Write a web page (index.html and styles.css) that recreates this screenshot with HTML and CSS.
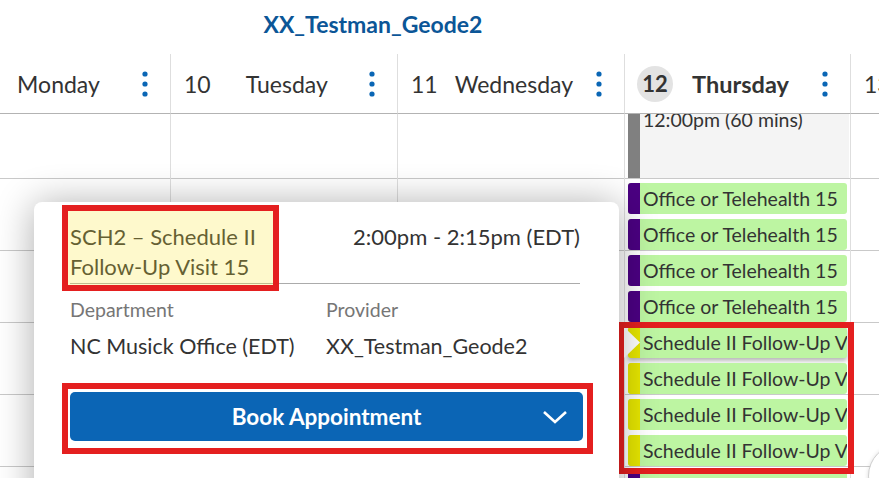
FILE: index.html
```html
<!DOCTYPE html>
<html lang="en">
<head>
<meta charset="utf-8">
<title>Schedule</title>
<link rel="stylesheet" href="styles.css">
</head>
<body>
<div class="app">
  <header class="topbar">
    <h1 class="provider-name">XX_Testman_Geode2</h1>
  </header>

  <div class="calendar">
    <div class="day-head">
      <span class="date">9</span><span class="day-name">Monday</span>
      <svg class="kebab" width="6" height="26" viewBox="0 0 6 26"><circle cx="3" cy="3" r="2.6"/><circle cx="3" cy="13" r="2.6"/><circle cx="3" cy="23" r="2.6"/></svg>
    </div>
    <div class="day-head">
      <span class="date">10</span><span class="day-name">Tuesday</span>
      <svg class="kebab" width="6" height="26" viewBox="0 0 6 26"><circle cx="3" cy="3" r="2.6"/><circle cx="3" cy="13" r="2.6"/><circle cx="3" cy="23" r="2.6"/></svg>
    </div>
    <div class="day-head">
      <span class="date">11</span><span class="day-name">Wednesday</span>
      <svg class="kebab" width="6" height="26" viewBox="0 0 6 26"><circle cx="3" cy="3" r="2.6"/><circle cx="3" cy="13" r="2.6"/><circle cx="3" cy="23" r="2.6"/></svg>
    </div>
    <div class="day-head today">
      <span class="date">12</span><span class="day-name">Thursday</span>
      <svg class="kebab" width="6" height="26" viewBox="0 0 6 26"><circle cx="3" cy="3" r="2.6"/><circle cx="3" cy="13" r="2.6"/><circle cx="3" cy="23" r="2.6"/></svg>
    </div>
    <div class="day-head">
      <span class="date">13</span><span class="day-name">Friday</span>
    </div>

    <div class="day-col"></div>
    <div class="day-col"></div>
    <div class="day-col"></div>
    <div class="day-col thursday">
      <div class="event block"><span class="bar"></span><span class="event-label event-time">12:00pm (60 mins)</span></div>
      <div class="event office"><span class="bar"></span><span class="event-label">Office or Telehealth 15</span></div>
      <div class="event office"><span class="bar"></span><span class="event-label">Office or Telehealth 15</span></div>
      <div class="event office"><span class="bar"></span><span class="event-label">Office or Telehealth 15</span></div>
      <div class="event office"><span class="bar"></span><span class="event-label">Office or Telehealth 15</span></div>
      <div class="event sched selected"><span class="bar"></span><span class="event-label">Schedule II Follow-Up Visit 15</span></div>
      <div class="event sched"><span class="bar"></span><span class="event-label">Schedule II Follow-Up Visit 15</span></div>
      <div class="event sched"><span class="bar"></span><span class="event-label">Schedule II Follow-Up Visit 15</span></div>
      <div class="event sched"><span class="bar"></span><span class="event-label">Schedule II Follow-Up Visit 15</span></div>
      <div class="event office"><span class="bar"></span><span class="event-label">Office or Telehealth 15</span></div>
      <div class="mark mark-events"></div>
    </div>
    <div class="day-col"></div>
  </div>

  <div class="popup">
    <div class="popup-head">
      <div class="appt-title">SCH2 – Schedule II Follow-Up Visit 15</div>
      <div class="appt-time">2:00pm - 2:15pm (EDT)</div>
    </div>
    <div class="details">
      <div class="label">Department</div>
      <div class="label">Provider</div>
      <div class="value">NC Musick Office (EDT)</div>
      <div class="value">XX_Testman_Geode2</div>
    </div>
    <div class="book-mark">
      <button class="book-btn" type="button">
        <span class="book-text">Book Appointment</span>
        <svg class="chevron" width="26" height="14" viewBox="0 0 26 14"><polyline points="2,2 13,12 24,2"/></svg>
      </button>
    </div>
  </div>

  <div class="fab"></div>
</div>
</body>
</html>
```

FILE: styles.css
```css
* { box-sizing: border-box; }

html, body {
  margin: 0;
  padding: 0;
  background: #ffffff;
}

body {
  font-family: Lato, "Open Sans", sans-serif;
  color: #333333;
  overflow: hidden;
  width: 879px;
  height: 478px;
}

.app {
  position: relative;
  width: 879px;
  height: 478px;
  overflow: hidden;
}

.topbar {
  height: 54px;
  display: flex;
  align-items: center;
  justify-content: center;
  padding-right: 133px;
  padding-bottom: 5px;
}

.provider-name {
  margin: 0;
  font-size: 23px;
  font-weight: 700;
  color: #0b5697;
  line-height: 1;
}

.calendar {
  display: grid;
  grid-template-columns: 227px 227px 227px 226px 227px;
  grid-template-rows: 60px 364px;
  margin-left: -56px;
}

.day-head {
  display: flex;
  align-items: center;
  padding-left: 13px;
  padding-right: 22px;
  border-right: 1px solid #dedede;
  border-bottom: 1px solid #b3b3b3;
  font-size: 23px;
}

.date {
  min-width: 24px;
}

.day-name {
  flex: 1;
  text-align: center;
  padding-right: 6px;
}

.kebab {
  fill: #0a66b5;
  flex: none;
}

.day-head.today {
  padding-left: 12px;
}

.day-head.today .date {
  width: 36px;
  height: 36px;
  border-radius: 50%;
  background: #e3e3e3;
  font-weight: 700;
  display: flex;
  align-items: center;
  justify-content: center;
  font-size: 22px;
}

.day-head.today .day-name {
  font-weight: 700;
  padding-right: 14px;
  font-size: 23.5px;
}

.day-col {
  border-right: 1px solid #dedede;
  background-image: repeating-linear-gradient(to bottom, transparent 0 71px, #c9c9c9 71px 72px);
  background-position: 0 -7px;
}

.thursday {
  position: relative;
  display: flex;
  flex-direction: column;
  gap: 5px;
  padding: 0 1px 0 3px;
}

.event {
  position: relative;
  flex: none;
  display: flex;
  height: 31px;
  margin-right: 2px;
  border-radius: 3px;
  background: #bdf5a2;
  font-size: 19.5px;
  line-height: 31px;
  color: #333333;
}

.bar {
  flex: none;
  width: 12px;
  background: #4b0082;
  border-radius: 3px 0 0 3px;
}

.event-label {
  flex: 1;
  min-width: 0;
  padding-left: 3px;
  white-space: nowrap;
  overflow: hidden;
}

.event.block {
  height: 64px;
  margin-right: 0;
  border-radius: 0;
  background: #f4f4f4;
  line-height: 20px;
  overflow: hidden;
}

.event.block .bar {
  background: #808080;
  border-radius: 0;
}

.event-time {
  margin-top: -4px;
  overflow: visible;
}

.event.sched .bar {
  background: #e5e500;
}

.event.selected {
  box-shadow: 0 3px 4px rgba(0, 0, 0, 0.28);
}

.event.selected::before {
  content: "";
  position: absolute;
  left: -4px;
  top: 0;
  width: 16px;
  height: 31px;
  background: #ffffff;
  clip-path: polygon(0 0, 100% 50%, 0 100%);
}

.mark {
  position: absolute;
  border: 6px solid #e41f1f;
  pointer-events: none;
}

.mark-events {
  left: -7px;
  top: 208px;
  width: 236px;
  height: 152px;
}

.popup {
  position: absolute;
  left: 34px;
  top: 202px;
  width: 585px;
  height: 320px;
  background: #ffffff;
  border-radius: 8px;
  box-shadow: 0 2px 38px rgba(0, 0, 0, 0.33);
  padding: 20px 39px 0 36px;
}

.popup-head {
  display: flex;
  justify-content: space-between;
  align-items: flex-start;
  border-bottom: 1px solid #ababab;
  padding-bottom: 1px;
}

.appt-title {
  position: relative;
  width: 203px;
  font-size: 22px;
  line-height: 30px;
}

.appt-title::after {
  content: "";
  position: absolute;
  left: -2px;
  top: -11px;
  right: 0;
  bottom: -3px;
  background: rgba(250, 230, 50, 0.25);
  outline: 6px solid #e41f1f;
}

.appt-time {
  font-size: 22px;
  line-height: 30px;
}

.details {
  display: grid;
  grid-template-columns: 256px 1fr;
  margin-top: 14px;
}

.label {
  font-size: 19.5px;
  line-height: 24px;
  color: #767676;
}

.value {
  font-size: 21.5px;
  line-height: 24px;
  margin-top: 12px;
}

.book-mark {
  margin: 25px -13px 0 -8px;
  border: 6px solid #e41f1f;
  padding: 3px 4px 7px 2px;
}

.book-btn {
  width: 100%;
  height: 49px;
  border: 0;
  border-radius: 5px;
  background: #0b65b5;
  color: #ffffff;
  font-family: inherit;
  font-size: 22.5px;
  font-weight: 700;
  display: grid;
  grid-template-columns: 1fr auto 1fr;
  align-items: center;
  padding: 0 15px;
}

.book-text {
  grid-column: 2;
}

.chevron {
  grid-column: 3;
  justify-self: end;
  fill: none;
  stroke: #ffffff;
  stroke-width: 2.6;
}

.fab {
  position: absolute;
  left: 868px;
  top: 444px;
  width: 64px;
  height: 64px;
  border-radius: 50%;
  background: #ffffff;
  border: 1px solid #cfcfcf;
  box-shadow: 0 1px 4px rgba(0, 0, 0, 0.15);
}
```
